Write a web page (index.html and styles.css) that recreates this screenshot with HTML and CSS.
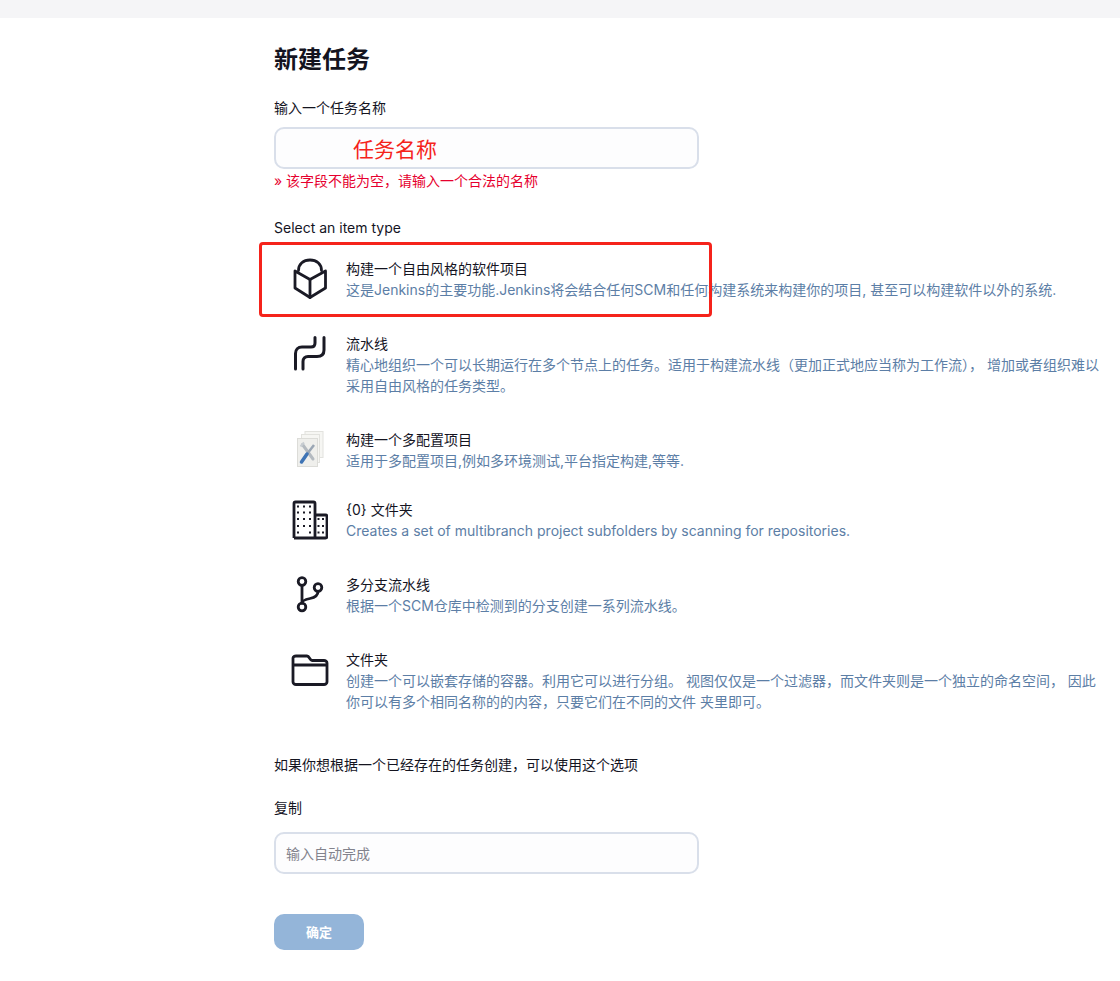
FILE: index.html
```html
<!DOCTYPE html>
<html lang="zh-CN">
<head>
<meta charset="utf-8">
<title>新建任务</title>
<link rel="stylesheet" href="styles.css">
</head>
<body>
<div class="topbar"></div>
<main class="page">
  <h1 class="title">新建任务</h1>
  <label class="label">输入一个任务名称</label>
  <div class="field">
    <input class="input" type="text">
    <span class="field-note">任务名称</span>
  </div>
  <div class="error">» 该字段不能为空，请输入一个合法的名称</div>
  <div class="section">Select an item type</div>
  <ul class="items">
    <li class="item">
      <span class="icon">
        <svg width="36" height="42" viewBox="0 0 36 42" fill="none" stroke="#1a1a25" stroke-width="2.8" stroke-linejoin="round" stroke-linecap="round"><path d="M18 21.500 3 13V30L18 39.500 33.500 30V13Z"/><path d="M18 21.500V39.500"/><path d="M6.500 12.500C6.500 6 11.500 2 18 2S29.500 6 29.500 12.500"/></svg>
      </span>
      <div class="body"><div class="name">构建一个自由风格的软件项目</div><div class="desc">这是Jenkins的主要功能.Jenkins将会结合任何SCM和任何构建系统来构建你的项目, 甚至可以构建软件以外的系统.</div></div>
    </li>
    <li class="item">
      <span class="icon">
        <svg width="36" height="42" viewBox="0 0 36 42" fill="none" stroke="#1a1a25" stroke-width="3" stroke-linecap="round" stroke-linejoin="round"><path d="M32 4.500V17C32 21 30 23.500 25 23.500H16C13 23.500 11 25.500 11 28.500V36"/><path d="M23 4.500V10C23 12.500 21.500 14 19 14H10C6 14 3.500 16.500 3.500 20.500V36"/></svg>
      </span>
      <div class="body"><div class="name">流水线</div><div class="desc">精心地组织一个可以长期运行在多个节点上的任务。适用于构建流水线（更加正式地应当称为工作流）， 增加或者组织难以采用自由风格的任务类型。</div></div>
    </li>
    <li class="item item-compact">
      <span class="icon">
        <svg width="36" height="42" viewBox="0 0 36 42"><rect x="13" y="2.500" width="18" height="26" fill="#f6f6f3" stroke="#e2e2de"/><rect x="9.500" y="5.500" width="18" height="28" fill="#f6f6f3" stroke="#e2e2de"/><rect x="5.500" y="9.500" width="20" height="28" fill="#efefec" stroke="#dcdcd8"/><path d="M10.500 15.500 21 30" stroke="#b4bac0" stroke-width="3" stroke-linecap="round"/><path d="M8.500 17.500 12 13.500" stroke="#c8cdd2" stroke-width="2"/><path d="M22 16 15 25" stroke="#9aa6b4" stroke-width="2.500"/><path d="M15 25 9.500 33" stroke="#3f74b5" stroke-width="3.500" stroke-linecap="round"/></svg>
      </span>
      <div class="body"><div class="name">构建一个多配置项目</div><div class="desc">适用于多配置项目,例如多环境测试,平台指定构建,等等.</div></div>
    </li>
    <li class="item">
      <span class="icon">
        <svg width="36" height="42" viewBox="0 0 36 42" fill="none" stroke="#1a1a25" stroke-width="2.8" stroke-linejoin="round"><path d="M2 39V4.500C2 3.500 2.500 3 3.500 3H21.500C22.500 3 23 3.500 23 4.500V39"/><path d="M23 16H33.500C34.500 16 35 16.500 35 17.500V37.500C35 38.500 34.500 39 33.500 39H2"/><path d="M5 7.500h2M11 7.500h2M17 7.500h2M5 13.500h2M11 13.500h2M17 13.500h2M5 20h2M11 20h2M17 20h2M5 27h2M11 27h2M17 27h2M5 33.500h2M17 33.500h2M25.500 20h2M30 20h2M25.500 27h2M30 27h2M25.500 33.500h2M30 33.500h2" stroke-width="2.200"/></svg>
      </span>
      <div class="body"><div class="name">{0} 文件夹</div><div class="desc">Creates a set of multibranch project subfolders by scanning for repositories.</div></div>
    </li>
    <li class="item">
      <span class="icon">
        <svg width="36" height="42" viewBox="0 0 36 42" fill="none" stroke="#1a1a25" stroke-width="2.8" stroke-linecap="round"><circle cx="10" cy="7.500" r="3.800"/><circle cx="26" cy="13.500" r="3.800"/><circle cx="10" cy="33" r="3.800"/><path d="M10 11.500V29"/><path d="M26 17.500C26 22 23 23.500 18 24.500C13 25.500 10 27 10 29"/></svg>
      </span>
      <div class="body"><div class="name">多分支流水线</div><div class="desc">根据一个SCM仓库中检测到的分支创建一系列流水线。</div></div>
    </li>
    <li class="item">
      <span class="icon">
        <svg width="38" height="42" viewBox="0 0 38 42" fill="none" stroke="#1a1a25" stroke-width="2.8" stroke-linejoin="round"><path d="M2 9V33C2 34.500 3.500 35.500 5 35.500H33C34.500 35.500 36 34.500 36 33V14C36 12.500 34.500 11.500 33 11.500H21C19 11.500 18.500 7 16 7H5C3.500 7 2 7.500 2 9Z"/><path d="M2 16H36"/></svg>
      </span>
      <div class="body"><div class="name">文件夹</div><div class="desc">创建一个可以嵌套存储的容器。利用它可以进行分组。 视图仅仅是一个过滤器，而文件夹则是一个独立的命名空间， 因此你可以有多个相同名称的的内容，只要它们在不同的文件 夹里即可。</div></div>
    </li>
  </ul>
  <p class="hint">如果你想根据一个已经存在的任务创建，可以使用这个选项</p>
  <label class="label copy-label">复制</label>
  <div class="field"><input class="input" type="text" placeholder="输入自动完成"></div>
  <button class="submit" type="button">确定</button>
  <div class="annotation"></div>
</main>
</body>
</html>
```

FILE: styles.css
```css
* { box-sizing: border-box; }
html, body { margin: 0; padding: 0; background: #fff; }
body {
  font-family: "Inter", "Noto Sans CJK SC", sans-serif;
  font-size: 14px;
  line-height: 21px;
  color: #14141f;
}
.topbar { height: 18px; background: #f5f5f7; }
.page { position: relative; margin-left: 274px; width: 832px; height: 963px; padding-top: 25px; }
.title { margin: 0 0 20px; font-size: 24px; line-height: 34px; font-weight: 700; color: #14141f; }
.label { display: block; line-height: 21px; margin-bottom: 9px; }
.field { position: relative; width: 425px; height: 42px; }
.input {
  display: block; width: 100%; height: 100%;
  border: 2px solid #d9dfea; border-radius: 10px;
  background: #fdfdfe; padding: 0 10px;
  font: 14px "Inter", "Noto Sans CJK SC", sans-serif;
  color: #14141f; outline: none;
}
.input::placeholder { color: #83838d; opacity: 1; }
.field-note { position: absolute; left: 79px; top: 7px; font-size: 21px; line-height: 32px; color: #f5231b; }
.error { margin-top: 1px; color: #e6002e; line-height: 21px; }
.section { margin-top: 26px; line-height: 21px; }
.items { list-style: none; margin: 20px 0 0; padding: 0; }
.item { display: flex; padding-bottom: 33px; }
.item-compact { padding-bottom: 28px; }
.icon { flex: 0 0 72px; height: 42px; display: flex; align-items: center; justify-content: center; }
.body { flex: 1; min-width: 0; }
.name { color: #14141f; }
.desc { color: #5c7ea6; }
.hint { margin: 9px 0 0; line-height: 21px; }
.copy-label { margin-top: 22px; margin-bottom: 14px; }
.submit {
  display: block; margin-top: 40px; padding-bottom: 2px; width: 90px; height: 36px;
  border: 0; border-radius: 10px; background: #94b5d9; color: #fff;
  font: 700 13px "Inter", "Noto Sans CJK SC", sans-serif;
}
.annotation {
  position: absolute; left: -15px; top: 224px; width: 453px; height: 75px;
  border: 3px solid #f5231b; border-radius: 4px; pointer-events: none;
}
```
